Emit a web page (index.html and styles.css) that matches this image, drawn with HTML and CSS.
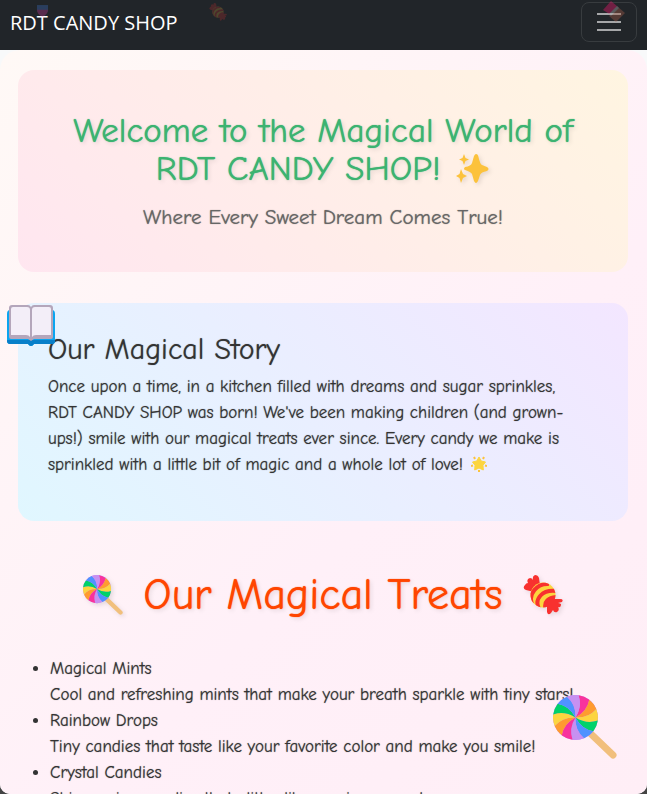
FILE: index.html
```html
<!DOCTYPE html>
<html lang="en">
<head>
<meta charset="utf-8">
<meta name="viewport" content="width=device-width, initial-scale=1">
<title>RDT CANDY SHOP</title>
<link rel="stylesheet" href="styles.css">
</head>
<body>
<svg class="defs" aria-hidden="true">
  <defs>
    <path id="wedge" d="M0 0Q7 -11 3 -22.3A22.5 22.5 0 0 1 13.8 -17.8Q11.6 -6 0 0Z"/>
    <symbol id="lollipop" viewBox="0 0 64 64">
      <path d="M38 39L60 60" stroke="#f1bf7c" stroke-width="7" stroke-linecap="round"/>
      <circle cx="22.5" cy="22.5" r="22.5" fill="#c790f1"/>
      <g transform="translate(22.5 22.5)">
        <use href="#wedge" fill="#f8339d"/>
        <use href="#wedge" fill="#ff9b2f" transform="rotate(30)"/>
        <use href="#wedge" fill="#fcd53f" transform="rotate(60)"/>
        <use href="#wedge" fill="#00d26a" transform="rotate(90)"/>
        <use href="#wedge" fill="#5092ff" transform="rotate(120)"/>
        <use href="#wedge" fill="#c790f1" transform="rotate(150)"/>
        <use href="#wedge" fill="#f8339d" transform="rotate(180)"/>
        <use href="#wedge" fill="#ff9b2f" transform="rotate(210)"/>
        <use href="#wedge" fill="#fcd53f" transform="rotate(240)"/>
        <use href="#wedge" fill="#00d26a" transform="rotate(270)"/>
        <use href="#wedge" fill="#5092ff" transform="rotate(300)"/>
        <use href="#wedge" fill="#c790f1" transform="rotate(330)"/>
      </g>
    </symbol>
    <clipPath id="ball"><circle cx="20" cy="20" r="12.5"/></clipPath>
    <symbol id="candy" viewBox="0 0 40 40">
      <path d="M11 17L3 15Q-1 13 2 10Q3 8 5 8Q3 4 7 3Q9 3 10 5Q9 1 12 0Q15 0 16 3L17 10Z" fill="#f8312f"/>
      <circle cx="20" cy="20" r="12.5" fill="#fcd53f"/>
      <g clip-path="url(#ball)" fill="none" stroke="#f8312f" stroke-width="4">
        <path d="M9 29C5 19 14 8 26 9"/>
        <path d="M16 34C11 24 19 14 34 16"/>
        <path d="M23 35C20 27 25 22 36 22"/>
      </g>
      <path d="M24 28L24 37Q25 41 28 38L30 35Q31 38 34 37Q37 35 35 32Q38 33 38 29Q36 28 35 28L39 27Q41 24 37 24L27 24Q24 24 24 28Z" fill="#f8312f"/>
    </symbol>
  </defs>
</svg>

<nav class="navbar">
  <a class="brand" href="#">RDT CANDY SHOP</a>
  <svg class="drift drift-cup" viewBox="0 0 12 13" aria-hidden="true"><path d="M0 0H12V7H0Z" fill="#3f78d8"/><path d="M0 5H12Q12 10 6 13Q0 10 0 5Z" fill="#d83aa0"/></svg>
  <svg class="drift drift-candy" aria-hidden="true"><use href="#candy"/></svg>
  <button class="toggler" type="button" aria-label="Toggle navigation">
    <svg viewBox="0 0 30 30" aria-hidden="true"><path d="M3 7H27M3 15H27M3 23H27" stroke="#a6a7a9" stroke-width="2"/></svg>
  </button>
  <svg class="drift drift-bar" viewBox="0 0 22 22" aria-hidden="true"><path d="M8 0L15 6L8 14L0 9Z" fill="#e8186a"/><path d="M15 6L22 12L13 21L6 15Z" fill="#a05a48"/><path d="M14 5L16 7L8 15L6 13Z" fill="#aaa"/></svg>
</nav>

<main class="page">
  <section class="card hero">
    <h1>Welcome to the Magical World of RDT CANDY SHOP!
      <svg class="sparkles" viewBox="0 0 34 30" role="img" aria-label="sparkles"><path d="M20 0Q22 0 22.5 3Q24 10 26 11L31 13Q34 15 31 17Q25 18 24 21L22 27Q20 31 18 27L16 20Q15 18 9 16Q7 15 9 13Q15 12 16 9L18 2Q19 0 20 0Z" fill="#fcc23c"/><path d="M8 0L9.5 4L13 5.5L9.5 7L8 11L6.5 7L3 5.5L6.5 4Z" fill="#fcc23c"/><path d="M5 15L7 20L11 22L7 24L5 29L3.500 24L0 22L3.500 20Z" fill="#fcc23c"/></svg></h1>
    <p class="tagline">Where Every Sweet Dream Comes True!</p>
  </section>

  <section class="card story">
    <svg class="book" viewBox="0 0 48 41" role="img" aria-label="open book">
      <path d="M0 9Q0 5 3 5H45Q48 5 48 9V35Q48 39 45 39H27Q26 41 24 41Q22 41 21 39H3Q0 39 0 35Z" fill="#0aa5f0"/>
      <path d="M0 35H48V36Q48 39 45 39H27Q24 43 21 39H3Q0 39 0 36Z" fill="#087fc9"/>
      <path d="M2 3Q2 0 5 0H21Q23 0 24 2Q25 0 27 0H43Q46 0 46 3V32Q46 34 44 34H27L24 36L21 34H4Q2 34 2 32Z" fill="#b4a6bb"/>
      <path d="M4 4Q4 2 6 2H20Q23 2 23 5V32Q22 30 19 30H4ZM44 4Q44 2 42 2H28Q25 2 25 5V32Q26 30 29 30H44Z" fill="#f3eef8"/>
    </svg>
    <h2>Our Magical Story</h2>
    <p>Once upon a time, in a kitchen filled with dreams and sugar sprinkles, RDT CANDY SHOP was born! We've been making children (and grown-ups!) smile with our magical treats ever since. Every candy we make is sprinkled with a little bit of magic and a whole lot of love!
      <svg class="star" viewBox="0 0 16 16" role="img" aria-label="glowing star"><path d="M8 1L10.200 5L14.500 6L12 9.300L12.300 14L8 12L3.700 14L4 9.300L1.500 6L5.800 5Z" fill="#fcd53f" stroke="#fcd53f" stroke-linejoin="round"/><path d="M3 1L4 3M13 1L12 3M0 10L2 9.500M16 10L14 9.500M8 14V16" stroke="#fcc23c" stroke-width="2"/></svg></p>
  </section>

  <section class="treats">
    <h2><svg aria-hidden="true"><use href="#lollipop"/></svg><span>Our Magical Treats</span><svg aria-hidden="true"><use href="#candy"/></svg></h2>
    <ul>
      <li>Magical Mints<br>Cool and refreshing mints that make your breath sparkle with tiny stars!</li>
      <li>Rainbow Drops<br>Tiny candies that taste like your favorite color and make you smile!</li>
      <li>Crystal Candies<br>Shimmering candies that glitter like precious gems!</li>
    </ul>
  </section>
</main>
<svg class="floating" aria-hidden="true"><use href="#lollipop"/></svg>
</body>
</html>
```
FILE: styles.css
```css
* { box-sizing: border-box; }

html { background: #444; }

body {
  margin: 0;
  height: 100vh;
  display: flex;
  flex-direction: column;
  overflow: hidden;
  border-radius: 0 0 10px 10px;
  background: #f8f9fa;
  color: #333;
  font: 17px/26px "Comic Sans MS", "Comic Neue", "Noto Sans", sans-serif;
}

h1, h2, p, ul { margin: 0; font-weight: 400; }

.defs { position: absolute; width: 0; height: 0; }

.navbar {
  position: relative;
  flex: none;
  display: flex;
  align-items: center;
  justify-content: space-between;
  height: 50px;
  padding: 0 10px;
  background: #212529;
}

.brand {
  color: #fff;
  font: 20px/30px "Segoe UI", "Open Sans", "Noto Sans", sans-serif;
  text-decoration: none;
  margin-bottom: 4px;
}

.toggler {
  width: 56px;
  height: 40px;
  margin-bottom: 6px;
  padding: 4px 12px;
  border: 1px solid #383c3f;
  border-radius: 8px;
  background: none;
}

.toggler svg { display: block; width: 30px; height: 30px; }

.drift { position: absolute; opacity: 0.3; }
.drift-cup { left: 37px; top: 5px; width: 11px; height: 12px; }
.drift-candy { left: 209px; top: 3px; width: 18px; height: 18px; opacity: 0.2; }
.drift-bar { right: 22px; top: 1px; width: 22px; height: 22px; opacity: 0.4; }

.page {
  flex: 1;
  min-height: 0;
  overflow: hidden;
  padding: 20px 19px 0 18px;
  border-radius: 20px 20px 0 0;
  background: linear-gradient(135deg, #fff9f6, #fff0f8 60%, #ffeef6);
}

.card,
.treats ul { text-shadow: 0 0 1px rgba(51, 51, 51, 0.6); }

.card { border-radius: 16px; }

.hero {
  padding: 42px 30px;
  text-align: center;
  background: linear-gradient(45deg, #ffe6f0, #fff5e1);
}

.hero h1 {
  color: #3cb371;
  font-size: 35px;
  line-height: 38px;
  text-shadow: 0 0 1px #3cb371, 2px 2px 4px rgba(0, 0, 0, 0.1);
}

.sparkles {
  width: 34px;
  height: 30px;
  margin-left: 4px;
  vertical-align: -4px;
  filter: drop-shadow(2px 2px 2px rgba(0, 0, 0, 0.1));
}

.tagline {
  margin-top: 16px;
  color: #666;
  font-size: 21px;
}

.story {
  position: relative;
  margin-top: 31px;
  padding: 31px 60px 43px 30px;
  background: linear-gradient(45deg, #e0f7ff, #f3e6ff);
}

.story h2 {
  margin-bottom: 8px;
  font-size: 30px;
  line-height: 32px;
}

.book { position: absolute; left: -11px; top: 2px; width: 48px; height: 41px; }

.star { width: 16px; height: 16px; margin-left: 2px; vertical-align: -2px; }

.treats h2 {
  display: flex;
  align-items: center;
  justify-content: center;
  gap: 20px;
  margin-top: 50px;
  color: #ff4500;
  font-size: 44px;
  line-height: 48px;
  text-shadow: 0 0 1px #ff4500, 2px 2px 4px rgba(0, 0, 0, 0.1);
}

.treats h2 svg {
  width: 40px;
  height: 40px;
  filter: drop-shadow(2px 2px 2px rgba(0, 0, 0, 0.1));
}

.treats ul { margin-top: 37px; padding-left: 32px; }

.floating { position: fixed; right: 30px; bottom: 35px; width: 64px; height: 64px; }
```
